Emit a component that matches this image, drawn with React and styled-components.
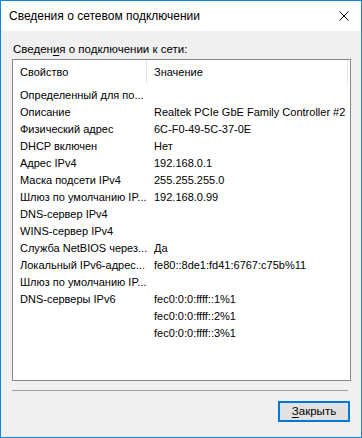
import React from 'react';
import styled, { createGlobalStyle } from 'styled-components';


const GlobalStyle = createGlobalStyle`
    html, body {
        margin: 0;
        padding: 0;
        background: #fff;
    }
`;

const Window = styled.div`
    background: #f0f0f0;
    border: 1px solid #1883d7;
    box-sizing: border-box;
    display: flex;
    flex-direction: column;
    height: 438px;
    width: 362px;
`;

const TitleBar = styled.div`
    align-items: center;
    background: #fff;
    display: flex;
    flex: none;
    height: 30px;
    justify-content: space-between;
    padding: 0 12px 0 8px;
`;

const Title = styled.span`
    color: #000;
    font-family: "Liberation Sans", Arial, sans-serif;
    font-size: 12px;
    padding-bottom: 1px;
`;

const CloseIcon = styled.svg`
    display: block;
    height: 10px;
    width: 10px;
`;

const Body = styled.div`
    display: flex;
    flex: 1;
    flex-direction: column;
    padding: 10px 11px 0 11px;
`;

const Label = styled.div`
    color: #000;
    font-family: "Liberation Sans", Arial, sans-serif;
    font-size: 11.5px;
    height: 18px;
    line-height: 16px;
    padding-left: 1px;
`;

const Mnemonic = styled.span`
    text-decoration: underline;
    text-underline-offset: 2px;
`;

const ListBox = styled.div`
    background: #fff;
    border: 1px solid #828790;
    box-sizing: border-box;
    height: 322px;
    width: 339px;
`;

const Header = styled.div`
    display: grid;
    grid-template-columns: 134px 201px;
    height: 26px;
`;

const HeaderCell = styled.div`
    align-items: center;
    border-right: 1px solid #e5e5e5;
    box-sizing: border-box;
    display: flex;
    font-family: "Liberation Sans", Arial, sans-serif;
    font-size: 11px;
    height: 23px;
    padding-left: 7px;
`;

const Row = styled.div`
    display: grid;
    grid-template-columns: 134px 1fr;
    height: 17px;
`;

const Cell = styled.div`
    align-items: center;
    color: #000;
    display: flex;
    font-family: "Liberation Sans", Arial, sans-serif;
    font-size: 11px;
    padding-left: 7px;
    white-space: nowrap;
`;

const Separator = styled.div`
    border-top: 1px solid #a0a0a0;
    margin: 9px 2px 0 0;
`;

const Footer = styled.div`
    display: flex;
    justify-content: flex-end;
    padding-top: 10px;
`;

const Button = styled.button`
    background: #e1e1e1;
    border: 2px solid #0078d7;
    box-sizing: border-box;
    color: #000;
    font-family: "Liberation Sans", Arial, sans-serif;
    font-size: 11.5px;
    height: 21px;
    line-height: 15px;
    padding: 0;
    width: 72px;
`;


const rows = [
    [ 'Определенный для по...', '' ],
    [ 'Описание', 'Realtek PCIe GbE Family Controller #2' ],
    [ 'Физический адрес', '6C-F0-49-5C-37-0E' ],
    [ 'DHCP включен', 'Нет' ],
    [ 'Адрес IPv4', '192.168.0.1' ],
    [ 'Маска подсети IPv4', '255.255.255.0' ],
    [ 'Шлюз по умолчанию IP...', '192.168.0.99' ],
    [ 'DNS-сервер IPv4', '' ],
    [ 'WINS-сервер IPv4', '' ],
    [ 'Служба NetBIOS через...', 'Да' ],
    [ 'Локальный IPv6-адрес...', 'fe80::8de1:fd41:6767:c75b%11' ],
    [ 'Шлюз по умолчанию IP...', '' ],
    [ 'DNS-серверы IPv6', 'fec0:0:0:ffff::1%1' ],
    [ '', 'fec0:0:0:ffff::2%1' ],
    [ '', 'fec0:0:0:ffff::3%1' ]
];


/**
 * Network connection details dialog.
 *
 * @returns {ReactElement}
 */
export default function App() {
    return (
        <>
            <GlobalStyle />
            <Window>
                <TitleBar>
                    <Title>Сведения о сетевом подключении</Title>
                    <CloseIcon viewBox = '0 0 10 10'>
                        <path
                            d = 'M0.5 0.5 L9.5 9.5 M9.5 0.5 L0.5 9.5'
                            fill = 'none'
                            stroke = '#000'
                            strokeWidth = '1' />
                    </CloseIcon>
                </TitleBar>
                <Body>
                    <Label>Сведен<Mnemonic>и</Mnemonic>я о подключении к сети:</Label>
                    <ListBox>
                        <Header>
                            <HeaderCell>Свойство</HeaderCell>
                            <HeaderCell>Значение</HeaderCell>
                        </Header>
                        { rows.map(([ name, value ], i) => (
                            <Row key = { i }>
                                <Cell>{ name }</Cell>
                                <Cell>{ value }</Cell>
                            </Row>
                        )) }
                    </ListBox>
                    <Separator />
                    <Footer>
                        <Button type = 'button'>
                            <Mnemonic>З</Mnemonic>акрыть
                        </Button>
                    </Footer>
                </Body>
            </Window>
        </>
    );
}
